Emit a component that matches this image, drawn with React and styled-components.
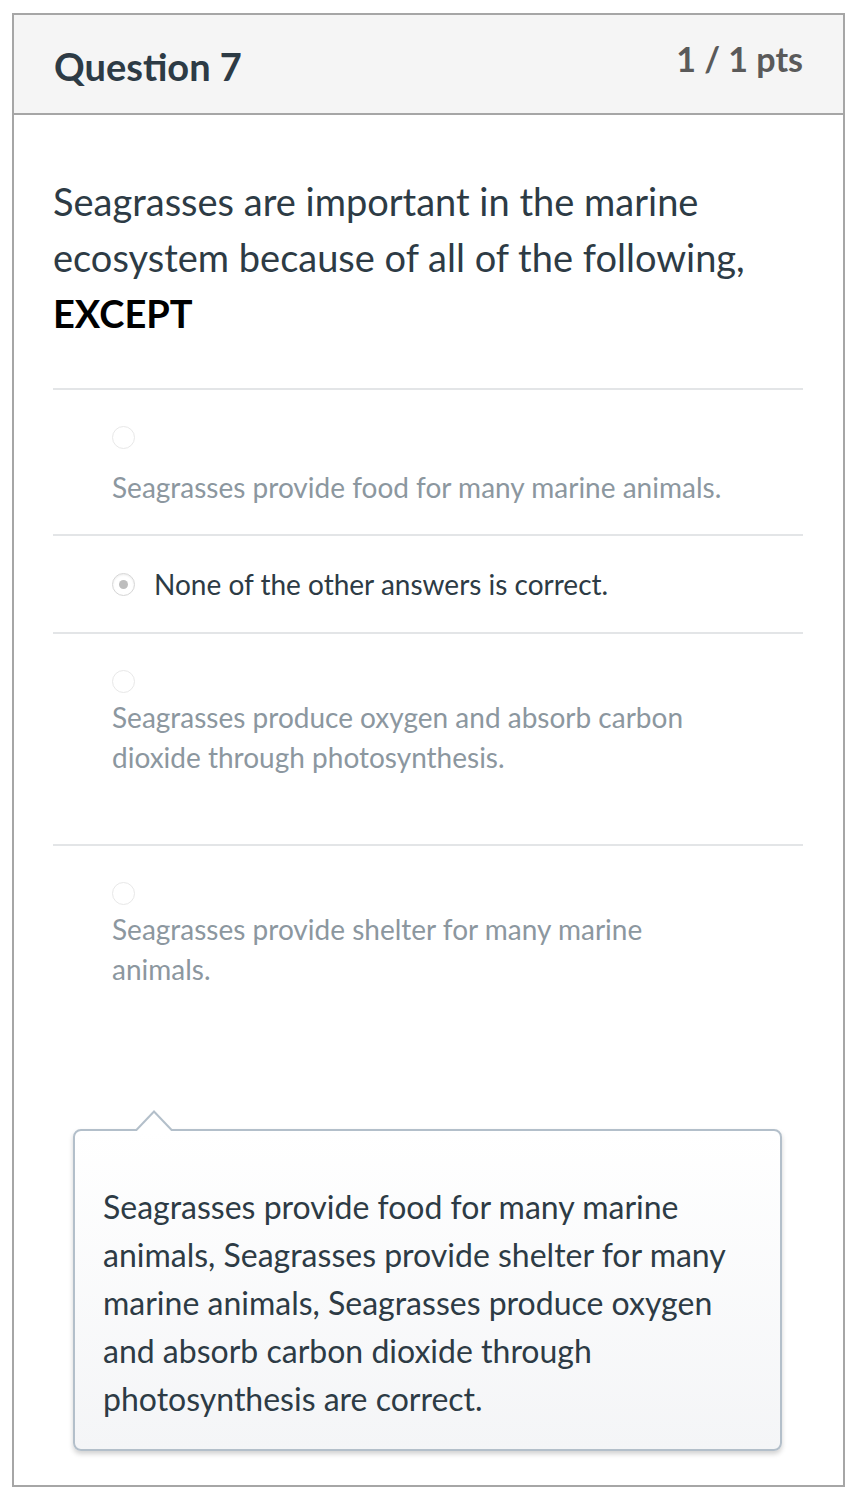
import React from 'react';
import styled, { createGlobalStyle } from 'styled-components';

const GlobalStyle = createGlobalStyle`
  body {
    margin: 0;
    background: #ffffff;
    font-family: Lato, "Noto Sans", sans-serif;
    color: #2d3b45;
  }
`;

const answers = [
  { text: 'Seagrasses provide food for many marine animals.', selected: false, gap: 18, bottom: 27 },
  { text: 'None of the other answers is correct.', selected: true },
  { text: 'Seagrasses produce oxygen and absorb carbon dioxide through photosynthesis.', selected: false, gap: 4, bottom: 67 },
  { text: 'Seagrasses provide shelter for many marine animals.', selected: false, gap: 4, bottom: 0 },
];

const Quiz = styled.div`
  width: 829px;
  margin: 13px 0 0 12px;
  border: 2px solid #a6a6a6;
`;

const Header = styled.div`
  display: flex;
  justify-content: space-between;
  align-items: flex-start;
  height: 98px;
  padding: 0 40px;
  background: #f5f5f5;
  border-bottom: 2px solid #a6a6a6;
`;

const Title = styled.h2`
  margin: 29px 0 0;
  font-size: 38px;
  line-height: 1.2;
  font-weight: 700;
  color: #2d3b45;
`;

const Points = styled.div`
  margin-top: 24px;
  font-size: 34px;
  line-height: 1.2;
  font-weight: 700;
  color: #5a5a5a;
`;

const Body = styled.div`
  padding: 58px 40px 34px 39px;
`;

const QuestionText = styled.p`
  margin: 0 0 47px;
  font-size: 38px;
  line-height: 56px;
  color: #2d3b45;

  strong {
    color: #000000;
    font-weight: 700;
  }
`;

const AnswerRow = styled.div`
  display: flex;
  flex-direction: ${(p) => (p.$inline ? 'row' : 'column')};
  align-items: ${(p) => (p.$inline ? 'center' : 'flex-start')};
  gap: ${(p) => p.$gap}px;
  padding: ${(p) => (p.$inline ? '28px 0 28px 59px' : `36px 0 ${p.$bottom}px 59px`)};
  border-top: 2px solid #e3e5e7;
`;

const Radio = styled.span`
  flex: none;
  display: flex;
  align-items: center;
  justify-content: center;
  width: 21px;
  height: 21px;
  border-radius: 50%;
  background: #ffffff;
  border: 1px solid ${(p) => (p.$checked ? '#d6d6d6' : '#e8e8e8')};
  box-shadow: ${(p) => (p.$checked ? 'inset 0 1px 2px rgba(0,0,0,0.08)' : 'none')};

  &::after {
    content: '';
    display: ${(p) => (p.$checked ? 'block' : 'none')};
    width: 9px;
    height: 9px;
    border-radius: 50%;
    background: #bdbdbd;
  }
`;

const AnswerText = styled.div`
  max-width: 625px;
  font-size: 28px;
  line-height: 40px;
  color: ${(p) => (p.$selected ? '#2d3b45' : '#8c979f')};
`;

const Feedback = styled.div`
  position: relative;
  margin: 140px 21px 0 20px;
  padding: 52px 28px 26px;
  border: 2px solid #b3bfca;
  border-radius: 8px;
  background: linear-gradient(#ffffff, #f4f5f7);
  box-shadow: 0 3px 5px rgba(0, 0, 0, 0.18);

  &::before,
  &::after {
    content: '';
    position: absolute;
    left: 59px;
    width: 0;
    height: 0;
    border-left: 20px solid transparent;
    border-right: 20px solid transparent;
    border-bottom: 21px solid #b3bfca;
  }

  &::before {
    top: -21px;
  }

  &::after {
    top: -18px;
    border-bottom-color: #ffffff;
  }
`;

const FeedbackText = styled.p`
  margin: 0;
  font-size: 32px;
  line-height: 48px;
  color: #2d3b45;
`;

const App = () => (
  <>
    <GlobalStyle />
    <Quiz>
      <Header>
        <Title>Question 7</Title>
        <Points>1 / 1 pts</Points>
      </Header>
      <Body>
        <QuestionText>
          Seagrasses are important in the marine ecosystem because of all of the following,{' '}
          <strong>EXCEPT</strong>
        </QuestionText>
        {answers.map((a) => (
          <AnswerRow key={a.text} $inline={a.selected} $gap={a.selected ? 19 : a.gap} $bottom={a.bottom}>
            <Radio $checked={a.selected} />
            <AnswerText $selected={a.selected}>{a.text}</AnswerText>
          </AnswerRow>
        ))}
        <Feedback>
          <FeedbackText>
            Seagrasses provide food for many marine animals, Seagrasses provide shelter for many
            marine animals, Seagrasses produce oxygen and absorb carbon dioxide through
            photosynthesis are correct.
          </FeedbackText>
        </Feedback>
      </Body>
    </Quiz>
  </>
);

export default App;
